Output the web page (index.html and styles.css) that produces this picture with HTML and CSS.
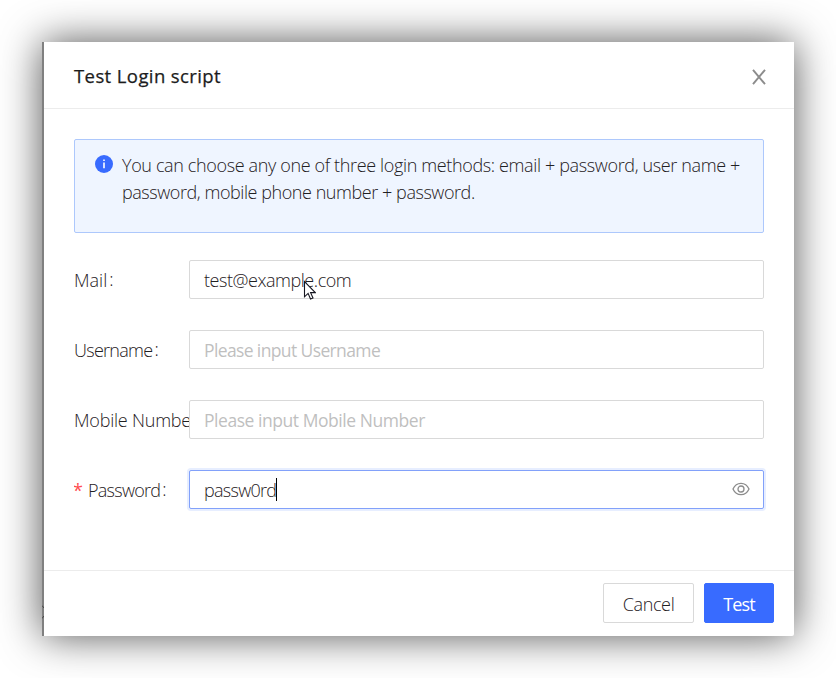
FILE: index.html
```html
<!DOCTYPE html>
<html lang="en">
<head>
<meta charset="utf-8">
<title>Test Login script</title>
<link rel="stylesheet" href="styles.css">
</head>
<body>
<div class="dialog">
  <svg class="edge-mark" viewBox="0 0 2 14"><path d="M0 .5 2 3M0 13.500 2 11"/></svg>
  <header class="header">
    <h1 class="title"><span>Test Login script</span></h1>
    <svg class="close" viewBox="0 0 16 16"><path d="M2 .8 14 15.200M14 .8 2 15.200"/></svg>
  </header>
  <main class="body">
    <div class="alert">
      <svg class="info" viewBox="0 0 18 18"><circle cx="9" cy="9" r="9"/><path d="M8.200 4.400h1.600v1.700H8.200zM8.200 7.400h1.600v5.900H8.200z"/></svg>
      <p class="alert-text"><span class="l1">You can choose any one of three login methods: email + password, user name +</span><br><span class="l2">password, mobile phone number + password.</span></p>
    </div>
    <div class="row">
      <div class="label"><span class="t-mail">Mail</span><span class="colon">:</span></div>
      <div class="field"><span class="t-email">test@example.com</span>
        <svg class="cursor" viewBox="0 0 13 20"><path d="M1.500 1.500v15.300l3.600-3.400 2.400 5.600 2.500-1-2.400-5.400h4.700z"/></svg>
      </div>
    </div>
    <div class="row">
      <div class="label"><span class="t-user">Username</span><span class="colon">:</span></div>
      <div class="field hint"><span class="t-puser">Please input Username</span></div>
    </div>
    <div class="row">
      <div class="label"><span class="t-mobile">Mobile Number</span></div>
      <div class="field hint"><span class="t-pmobile">Please input Mobile Number</span></div>
    </div>
    <div class="row">
      <div class="label"><span class="star">*</span><span class="t-pass">Password</span><span class="colon">:</span></div>
      <div class="field focus"><span class="t-pw">passw0rd</span><i class="caret"></i>
        <svg class="eye" viewBox="0 0 18 14"><path d="M1 7C4.400-.6 13.600-.6 17 7 13.600 14.600 4.400 14.600 1 7z"/><circle cx="9" cy="7" r="3"/></svg>
      </div>
    </div>
  </main>
  <footer class="footer">
    <div class="btn cancel"><span class="t-cancel">Cancel</span></div>
    <div class="btn primary"><span class="t-test">Test</span></div>
  </footer>
</div>
</body>
</html>
```
FILE: styles.css
```css
* { box-sizing: border-box; }
body {
  margin: 0;
  padding: 42px;
  background: #fff;
  color: #1f2023;
  font: 300 18px/27px "Open Sans", "Noto Sans", sans-serif;
  overflow: hidden;
}
.dialog {
  position: relative;
  width: 752px;
  height: 594px;
  display: flex;
  flex-direction: column;
  background: #fff;
  border-left: 2px solid #808080;
  border-radius: 0 0 2px 0;
  box-shadow: 0 0 42px rgba(0, 0, 0, .68);
}
.edge-mark { position: absolute; left: -2px; bottom: 17px; width: 2px; height: 14px; stroke: #444; fill: none; }
span { white-space: nowrap; }
.header {
  height: 67px;
  padding: 0 27px 0 30px;
  display: flex;
  align-items: center;
  justify-content: space-between;
  border-bottom: 1px solid #ececec;
}
.title { margin: 1px 0 0; font-size: 18.5px; font-weight: 500; letter-spacing: .4px; color: #1c1c1c; -webkit-text-stroke: .25px #1c1c1c; }
.close { width: 16px; height: 16px; margin-top: 3px; fill: none; stroke: #8c8c8c; stroke-width: 1.9; }
.body { flex: 1; padding: 30px 30px 0; }
.alert {
  height: 94px;
  padding: 12px 20px;
  display: flex;
  border: 1px solid #adc8fc;
  border-radius: 2px;
  background: #eff5ff;
  margin-bottom: 27px;
}
.info { width: 18px; height: 18px; margin: 3px 9px 0 0; flex: none; fill: #386bff; }
.info path { fill: #fff; }
.alert-text { margin: 0; }
.l1 { letter-spacing: -.36px; }
.l2 { letter-spacing: -.44px; }
.t-email { letter-spacing: -.45px; }
.t-user, .t-pass, .t-pw { letter-spacing: -.72px; }
.t-mobile { letter-spacing: -.22px; }
.t-puser { letter-spacing: -.62px; }
.t-pmobile { letter-spacing: -.45px; }
.t-cancel { letter-spacing: -.35px; }
.t-test { letter-spacing: -.9px; }
.row { display: flex; height: 39px; margin-bottom: 31px; }
.label { width: 115px; flex: none; overflow: hidden; display: flex; align-items: center; padding-top: 2px; }
.colon { margin: -2px 0 0 2px; }
.star { color: #ff4d4f; margin: 0 5px 0 -1px; font-weight: 400; }
.field {
  position: relative;
  flex: 1;
  display: flex;
  align-items: center;
  padding: 2px 14px 0;
  border: 1px solid #d9d9d9;
  border-radius: 2px;
  background: #fff;
}
.hint { color: #bfbfbf; font-size: 17.5px; font-weight: 400; }
.focus { border-color: #82a1fa; box-shadow: 0 0 0 2px #e7eeff; }
.caret { width: 1px; height: 23px; background: #000; margin-top: -3px; }
.eye { width: 18px; height: 14px; margin: -3px -1px 0 auto; fill: none; stroke: #8c8c8c; stroke-width: 1.3; }
.cursor { position: absolute; left: 113px; top: 19px; width: 13px; height: 20px; fill: #fff; stroke: #15151f; stroke-width: 1.1; }
.footer {
  height: 66px;
  padding: 12px 20px;
  display: flex;
  justify-content: flex-end;
  gap: 10px;
  border-top: 1px solid #ececec;
}
.btn {
  height: 40px;
  display: flex;
  align-items: center;
  justify-content: center;
  border: 1px solid #d9d9d9;
  border-radius: 2px;
  padding-top: 3px;
}
.cancel { width: 91px; }
.primary { width: 70px; background: #386bff; border-color: #386bff; color: #fff; font-weight: 400; }
```
